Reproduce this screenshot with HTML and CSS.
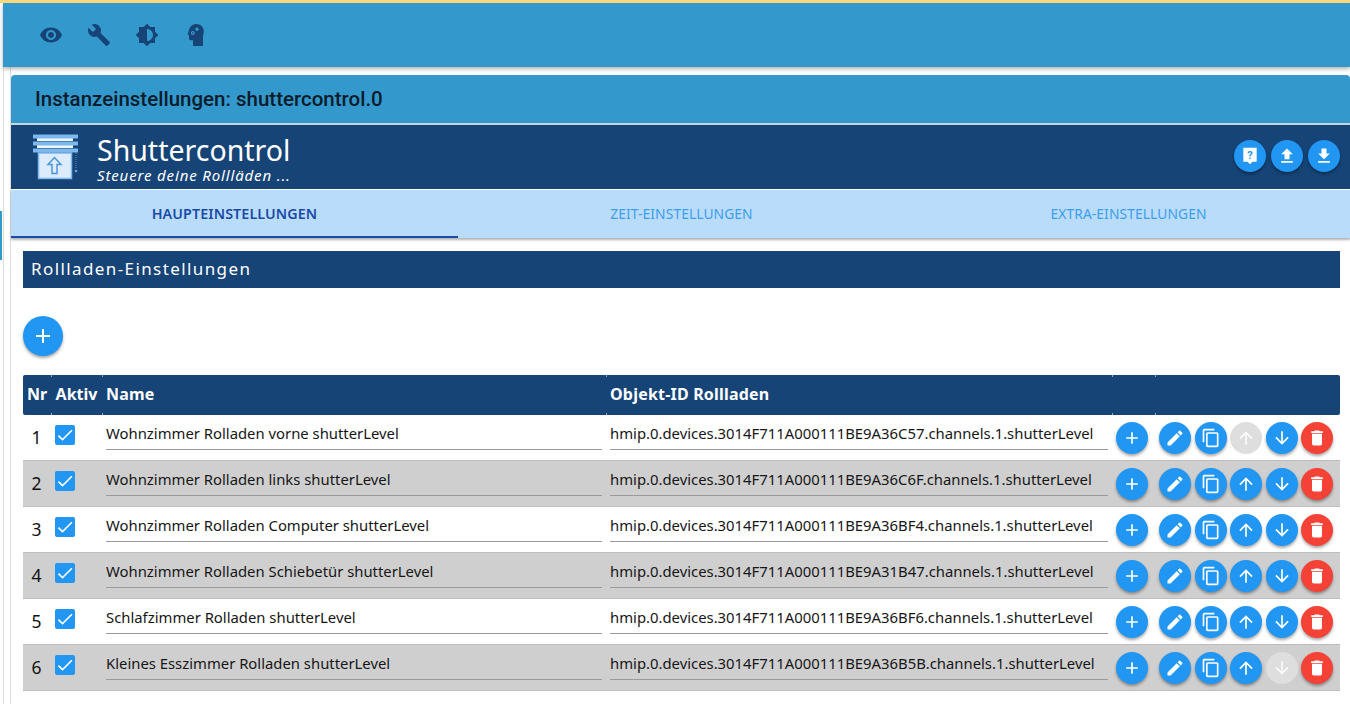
FILE: index.html
```html
<!DOCTYPE html>
<html lang="de">
<head>
<meta charset="utf-8">
<title>Shuttercontrol</title>
<link rel="stylesheet" href="styles.css">
</head>
<body>
<svg class="defs" width="0" height="0">
  <symbol id="i-plus" viewBox="0 0 24 24"><path d="M19 13h-6v6h-2v-6H5v-2h6V5h2v6h6v2z"/></symbol>
  <symbol id="i-edit" viewBox="0 0 24 24"><path d="M3 17.25V21h3.75L17.81 9.94l-3.75-3.75L3 17.25zM20.71 7.04a1 1 0 0 0 0-1.41l-2.34-2.34a1 1 0 0 0-1.41 0l-1.83 1.83 3.75 3.75 1.83-1.83z"/></symbol>
  <symbol id="i-copy" viewBox="0 0 24 24"><path d="M16 1H4a2 2 0 0 0-2 2v14h2V3h12V1zm3 4H8a2 2 0 0 0-2 2v14a2 2 0 0 0 2 2h11a2 2 0 0 0 2-2V7a2 2 0 0 0-2-2zm0 16H8V7h11v14z"/></symbol>
  <symbol id="i-up" viewBox="0 0 24 24"><path d="M4 12l1.41 1.41L11 7.83V20h2V7.83l5.58 5.59L20 12l-8-8-8 8z"/></symbol>
  <symbol id="i-down" viewBox="0 0 24 24"><path d="M20 12l-1.41-1.41L13 16.17V4h-2v12.17l-5.58-5.59L4 12l8 8 8-8z"/></symbol>
  <symbol id="i-del" viewBox="0 0 24 24"><path d="M6 19a2 2 0 0 0 2 2h8a2 2 0 0 0 2-2V7H6v12zM19 4h-3.5l-1-1h-5l-1 1H5v2h14V4z"/></symbol>
  <symbol id="i-check" viewBox="0 0 24 24"><path d="M9 16.17 4.83 12l-1.42 1.41L9 19 21 7l-1.41-1.41z"/></symbol>
</svg>

<div class="edge"></div>
<div class="accent"></div>
<header class="topbar">
  <svg class="top-icon" viewBox="0 0 24 24"><path d="M12 4.5C7 4.5 2.73 7.61 1 12c1.73 4.39 6 7.5 11 7.5s9.27-3.11 11-7.5c-1.730-4.390-6-7.500-11-7.500zM12 17c-2.760 0-5-2.240-5-5s2.240-5 5-5 5 2.240 5 5-2.240 5-5 5zm0-8c-1.660 0-3 1.340-3 3s1.340 3 3 3 3-1.340 3-3-1.340-3-3-3z"/></svg>
  <svg class="top-icon" viewBox="0 0 24 24"><path d="M22.7 19l-9.100-9.100c.9-2.300.4-5-1.500-6.900-2-2-5-2.400-7.400-1.300L9 6 6 9 1.600 4.700C.4 7.100.9 10.100 2.900 12.100c1.900 1.900 4.600 2.400 6.900 1.500l9.100 9.100c.4.4 1 .4 1.400 0l2.300-2.300c.5-.4.5-1.100.1-1.400z"/></svg>
  <svg class="top-icon" viewBox="0 0 24 24"><path d="M20 15.310 23.310 12 20 8.690V4h-4.690L12 .69 8.690 4H4v4.690L.69 12 4 15.310V20h4.690L12 23.310 15.310 20H20v-4.690zM12 18V6c3.310 0 6 2.690 6 6s-2.690 6-6 6z"/></svg>
  <svg class="top-icon" viewBox="0 0 24 24"><path fill-rule="evenodd" d="M13.500 1C9.500 1 6.700 3.500 6 7.200L4.500 11.300 6 12.200V15.500C6 16.500 6.800 17.200 8 17.200H10V23H20V12.500C20.500 11.300 20.800 9.800 20.800 8.300 20.800 4.200 17.500 1 13.500 1ZM14 4.500A1.700 1.700 0 1 1 14 7.900 1.700 1.700 0 0 1 14 4.500ZM9.800 8A2 2 0 1 1 9.800 12 2 2 0 0 1 9.800 8Z"/><circle cx="9.800" cy="10" r=".8"/></svg>
</header>

<main class="panel">
  <h1 class="title">Instanzeinstellungen: shuttercontrol.0</h1>
  <section class="brand">
    <svg class="logo" viewBox="0 0 48 48">
      <path class="l-white" d="M6 5h36v3H6zM6 12h36v3H6z"/>
      <path class="l-slat" d="M2 1.500h45v4H2zM2 8.500h45v4H2zM2 15.500h45v4H2z"/>
      <rect class="l-box" x="7.500" y="20" width="33" height="25.500"/>
      <path class="l-arrow" d="M23.500 24.500l-6.500 7h4v9h5v-9h4z"/>
      <path class="l-cord" d="M45 20v16"/>
      <circle class="l-dot" cx="45" cy="38" r="1.300"/>
    </svg>
    <div class="brand-text">
      <div class="brand-name">Shuttercontrol</div>
      <div class="brand-sub">Steuere deine Rollläden ...</div>
    </div>
    <div class="brand-actions">
      <button class="fab"><svg viewBox="0 0 24 24"><path d="M20 2H4v17h5l3 3 3-3h5V2z"/><text class="help-q" x="12" y="15.500" text-anchor="middle">?</text></svg></button>
      <button class="fab"><svg viewBox="0 0 24 24"><path d="M9 16h6v-6h4l-7-7-7 7h4v6zm-4 2h14v2H5v-2z"/></svg></button>
      <button class="fab"><svg viewBox="0 0 24 24"><path d="M19 9h-4V3H9v6H5l7 7 7-7zM5 18v2h14v-2H5z"/></svg></button>
    </div>
  </section>
  <nav class="tabs">
    <div class="tab active">HAUPTEINSTELLUNGEN</div>
    <div class="tab">ZEIT-EINSTELLUNGEN</div>
    <div class="tab">EXTRA-EINSTELLUNGEN</div>
  </nav>
  <div class="content">
    <h2 class="section">Rollladen-Einstellungen</h2>
    <button class="fab add"><svg><use href="#i-plus"/></svg></button>
    <table class="grid">
      <colgroup>
        <col class="c-nr"><col class="c-akt"><col class="c-name"><col class="c-id"><col class="c-add"><col class="c-act">
      </colgroup>
      <thead>
        <tr><th class="ctr">Nr</th><th class="ctr">Aktiv</th><th>Name</th><th>Objekt-ID Rollladen</th><th></th><th></th></tr>
      </thead>
      <tbody>
        <tr>
          <td class="nr">1</td><td><span class="cb"><svg><use href="#i-check"/></svg></span></td>
          <td><div class="field">Wohnzimmer Rolladen vorne shutterLevel</div></td>
          <td><div class="field">hmip.0.devices.3014F711A000111BE9A36C57.channels.1.shutterLevel</div></td>
          <td><button class="fab sm"><svg><use href="#i-plus"/></svg></button></td>
          <td><div class="acts"><button class="fab sm"><svg><use href="#i-edit"/></svg></button><button class="fab sm"><svg><use href="#i-copy"/></svg></button><button class="fab sm off"><svg><use href="#i-up"/></svg></button><button class="fab sm"><svg><use href="#i-down"/></svg></button><button class="fab sm red"><svg><use href="#i-del"/></svg></button></div></td>
        </tr>
        <tr>
          <td class="nr">2</td><td><span class="cb"><svg><use href="#i-check"/></svg></span></td>
          <td><div class="field">Wohnzimmer Rolladen links shutterLevel</div></td>
          <td><div class="field">hmip.0.devices.3014F711A000111BE9A36C6F.channels.1.shutterLevel</div></td>
          <td><button class="fab sm"><svg><use href="#i-plus"/></svg></button></td>
          <td><div class="acts"><button class="fab sm"><svg><use href="#i-edit"/></svg></button><button class="fab sm"><svg><use href="#i-copy"/></svg></button><button class="fab sm"><svg><use href="#i-up"/></svg></button><button class="fab sm"><svg><use href="#i-down"/></svg></button><button class="fab sm red"><svg><use href="#i-del"/></svg></button></div></td>
        </tr>
        <tr>
          <td class="nr">3</td><td><span class="cb"><svg><use href="#i-check"/></svg></span></td>
          <td><div class="field">Wohnzimmer Rolladen Computer shutterLevel</div></td>
          <td><div class="field">hmip.0.devices.3014F711A000111BE9A36BF4.channels.1.shutterLevel</div></td>
          <td><button class="fab sm"><svg><use href="#i-plus"/></svg></button></td>
          <td><div class="acts"><button class="fab sm"><svg><use href="#i-edit"/></svg></button><button class="fab sm"><svg><use href="#i-copy"/></svg></button><button class="fab sm"><svg><use href="#i-up"/></svg></button><button class="fab sm"><svg><use href="#i-down"/></svg></button><button class="fab sm red"><svg><use href="#i-del"/></svg></button></div></td>
        </tr>
        <tr>
          <td class="nr">4</td><td><span class="cb"><svg><use href="#i-check"/></svg></span></td>
          <td><div class="field">Wohnzimmer Rolladen Schiebetür shutterLevel</div></td>
          <td><div class="field">hmip.0.devices.3014F711A000111BE9A31B47.channels.1.shutterLevel</div></td>
          <td><button class="fab sm"><svg><use href="#i-plus"/></svg></button></td>
          <td><div class="acts"><button class="fab sm"><svg><use href="#i-edit"/></svg></button><button class="fab sm"><svg><use href="#i-copy"/></svg></button><button class="fab sm"><svg><use href="#i-up"/></svg></button><button class="fab sm"><svg><use href="#i-down"/></svg></button><button class="fab sm red"><svg><use href="#i-del"/></svg></button></div></td>
        </tr>
        <tr>
          <td class="nr">5</td><td><span class="cb"><svg><use href="#i-check"/></svg></span></td>
          <td><div class="field">Schlafzimmer Rolladen shutterLevel</div></td>
          <td><div class="field">hmip.0.devices.3014F711A000111BE9A36BF6.channels.1.shutterLevel</div></td>
          <td><button class="fab sm"><svg><use href="#i-plus"/></svg></button></td>
          <td><div class="acts"><button class="fab sm"><svg><use href="#i-edit"/></svg></button><button class="fab sm"><svg><use href="#i-copy"/></svg></button><button class="fab sm"><svg><use href="#i-up"/></svg></button><button class="fab sm"><svg><use href="#i-down"/></svg></button><button class="fab sm red"><svg><use href="#i-del"/></svg></button></div></td>
        </tr>
        <tr>
          <td class="nr">6</td><td><span class="cb"><svg><use href="#i-check"/></svg></span></td>
          <td><div class="field">Kleines Esszimmer Rolladen shutterLevel</div></td>
          <td><div class="field">hmip.0.devices.3014F711A000111BE9A36B5B.channels.1.shutterLevel</div></td>
          <td><button class="fab sm"><svg><use href="#i-plus"/></svg></button></td>
          <td><div class="acts"><button class="fab sm"><svg><use href="#i-edit"/></svg></button><button class="fab sm"><svg><use href="#i-copy"/></svg></button><button class="fab sm"><svg><use href="#i-up"/></svg></button><button class="fab sm off"><svg><use href="#i-down"/></svg></button><button class="fab sm red"><svg><use href="#i-del"/></svg></button></div></td>
        </tr>
      </tbody>
    </table>
  </div>
</main>
</body>
</html>
```

FILE: styles.css
```css
* { box-sizing: border-box; }
html, body { margin: 0; height: 100%; overflow: hidden; }
body { background: #fff; font-family: "Open Sans", "Noto Sans", sans-serif; border-top: 3px solid #fcd77f; color: #111; }
.defs { position: absolute; }
.edge { position: absolute; left: 3px; top: 67px; bottom: 0; width: 8px; border-left: 1px solid #ddd; border-right: 1px solid #ddd; }
.accent { position: absolute; left: 0; top: 211px; width: 2px; height: 49px; background: #3399cc; }

.topbar { height: 64px; margin-left: 3px; background: #3399cc; box-shadow: 0 2px 4px rgba(0,0,0,.3); display: flex; align-items: center; padding: 0 0 0 36px; gap: 24px; position: relative; }
.top-icon { width: 24px; height: 24px; fill: #164477; display: block; flex: none; }

.panel { margin: 8px 0 0 11px; position: relative; }
.title { margin: 0; height: 48px; background: #3399cc; border-radius: 4px 4px 0 0; padding-left: 24px; font: 500 20.500px/48px Roboto, sans-serif; color: #0c1c2c; }
.brand { height: 67px; border-top: 2px solid #c5d5dc; background: #164477; border-bottom: 1px solid #fff; display: flex; align-items: flex-start; position: relative; }
.logo { width: 48px; height: 48px; margin: 8px 0 0 20px; flex: none; }
.l-slat { fill: #7db8ee; }
.l-white { fill: #eef6fe; }
.l-box { fill: #dcecfd; stroke: #7db8ee; stroke-width: 1.500; }
.l-arrow { fill: #dcecfd; stroke: #4e94dc; stroke-width: 1.500; }
.l-cord { stroke: #4f8fce; stroke-width: 1; stroke-dasharray: 1 1; fill: none; }
.l-dot { fill: #6aa8e4; }
.brand-text { margin-left: 18px; color: #fff; }
.brand-name { font: 400 28.500px/32px "Noto Sans", sans-serif; margin-top: 9px; }
.brand-sub { font: italic 400 15px/18px "Noto Sans", sans-serif; letter-spacing: .85px; }
.brand-actions { margin-left: auto; margin-top: 15px; margin-right: 10px; display: flex; gap: 5px; }

.fab { width: 32px; height: 32px; padding: 0; border: 0; border-radius: 50%; background: #2196f3; box-shadow: 0 2px 3px rgba(0,0,0,.35); display: flex; align-items: center; justify-content: center; flex: none; }
.fab svg { width: 20px; height: 20px; fill: #fff; display: block; }
.help-q { font: 700 13px Roboto, sans-serif; fill: #2196f3; }
.fab.off { background: #dedede; box-shadow: none; }
.fab.off svg { fill: #fbfbfb; }
.fab.red { background: #f44336; }
.fab.add { width: 40px; height: 40px; margin: 28px 0 0 0; }
.fab.add svg { width: 24px; height: 24px; }

.tabs { height: 48px; background: #b9dcfa; display: flex; box-shadow: 0 2px 2px rgba(0,0,0,.3); position: relative; overflow: visible; }
.tab { flex: 0 0 447px; display: flex; align-items: center; justify-content: center; font: 400 13.800px "Noto Sans", sans-serif; letter-spacing: .1px; color: #3d9df0; padding-bottom: 1px; }
.tab.active { color: #1b4ba6; font-weight: 600; font-size: 14.300px; border-bottom: 2px solid #1b4ba6; padding-top: 1px; }

.content { padding: 13px 10px 0 12px; }
.section { margin: 0; height: 37px; background: #164477; color: #fff; font: 400 17px/36px "Noto Sans", sans-serif; letter-spacing: 1.400px; padding-left: 8px; }

.grid { width: 1317px; margin-top: 19px; border-collapse: separate; border-spacing: 0; table-layout: fixed; }
.c-nr { width: 28px; } .c-akt { width: 51px; } .c-name { width: 504px; } .c-id { width: 506px; } .c-add { width: 43px; } .c-act { width: 185px; }
.grid th { height: 40px; background: #164477; color: #fff; text-align: left; padding: 0 4px 3px; font: 700 16px "Noto Sans", sans-serif; letter-spacing: .2px; position: relative; }
.grid th:first-child { border-radius: 2px 0 0 2px; }
.grid th:last-child { border-radius: 0 2px 2px 0; }
.grid th.ctr { text-align: center; padding: 0 0 3px; letter-spacing: 0; }
.grid th:not(:first-child)::before, .grid th:not(:first-child)::after { content: ""; position: absolute; left: 0; width: 1px; height: 2px; background: #8fa6c0; }
.grid th:not(:first-child)::before { top: 0; }
.grid th:not(:first-child)::after { bottom: 0; }
.grid td { height: 46px; padding: 0 4px; border-bottom: 1px solid #bdbdbd; vertical-align: top; }
.grid tbody tr:nth-child(even) td { background: #cfcfcf; }
.grid td.nr { text-align: center; font: 400 17.500px/45px "Noto Sans", sans-serif; padding: 0 1px 0 0; }
.cb { display: block; width: 20px; height: 20px; border-radius: 2px; background: #2196f3; margin: 10px 0 0 0; }
.cb svg { width: 20px; height: 20px; fill: #fff; display: block; }
.field { height: 35px; border-bottom: 1px solid #9a9a9a; font: 400 14.850px/36px "Noto Sans", sans-serif; white-space: nowrap; overflow: hidden; color: #161616; }
.fab.sm { margin-top: 7px; }
.acts { display: flex; gap: 3.500px; }
```
